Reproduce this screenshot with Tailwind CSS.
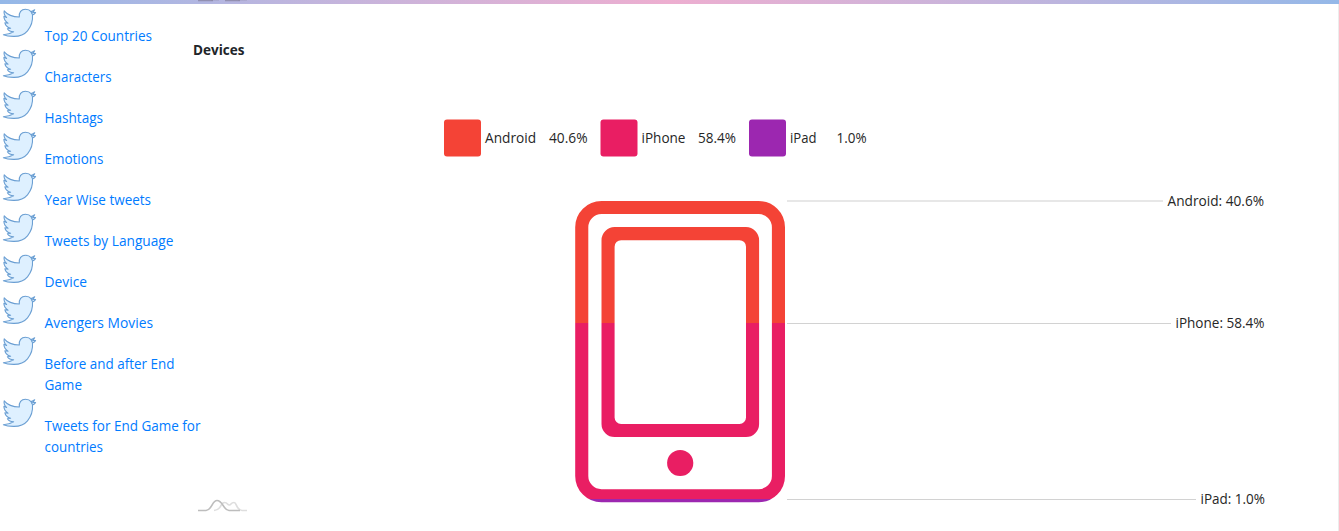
<!DOCTYPE html>
<html lang="en">
<head>
<meta charset="utf-8">
<title>Devices</title>
<script src="https://cdn.jsdelivr.net/npm/@tailwindcss/browser@4"></script>
</head>
<body class="h-[531px] overflow-hidden bg-white font-['Open_Sans',sans-serif] text-sm text-[#212529]">
<svg class="hidden">
  <symbol id="bird" viewBox="0 0 38 32">
    <path d="M4.2 4.800C7 8.200 12 10.800 19.300 11C18.800 6.500 21.200 3.200 25.500 3.200C28.300 3.200 30 4.200 31 5.600C32.300 5.300 33.600 4.700 34.700 3.800L33 6.500L35.600 6.500L33.900 8.300L32.500 9C33 15 31 20.500 27.500 24.800C24 29 19 30.500 13.500 30.400C9.500 30.300 6 29.800 3.400 28.700C7.500 28.500 10.500 27.800 13.600 25.800C10.800 25.800 8.500 24.700 7.400 22.800L10.600 22.300C7.600 21.300 5.400 19.300 4.900 16.800L8 17.300C5.200 15.300 3.800 13 3.900 10.300L6.600 11.500C4.400 9.500 3.700 7.300 4.200 4.800Z" fill="#def0ff" stroke="#6b9fd3" stroke-width="1.1" stroke-linejoin="round"/>
    <path d="M31 5.6L32.5 9M31.500 7.200L34 6.300" fill="none" stroke="#6b9fd3"/>
  </symbol>
</svg>
<div class="h-1 bg-linear-to-r from-[#94b8e8] via-[#edaed0] to-[#94b8e8] pl-[198px]">
  <svg class="block" width="50" height="4"><path d="M0 .500H15M27 .500H42" stroke="#817d98" stroke-opacity=".65" stroke-width="1.300"/><path d="M13 .5H21M40 .5H49" stroke="#817d98" stroke-opacity=".2"/></svg>
</div>
<div class="flex h-[527px]">
  <nav class="w-[193px] shrink-0 pt-[2px] leading-[21px] text-[#007bff]">
    <a class="flex"><svg class="h-8 w-[38px] shrink-0"><use href="#bird"/></svg><span class="pt-5 pl-[6px]"><svg class="block h-[21px] w-[110px] overflow-visible" fill="currentColor"><text x=".5" y="15.3" textLength="107.5" lengthAdjust="spacingAndGlyphs">Top 20 Countries</text></svg></span></a>
    <a class="flex"><svg class="h-8 w-[38px] shrink-0"><use href="#bird"/></svg><span class="pt-5 pl-[6px]"><svg class="block h-[21px] w-[110px] overflow-visible" fill="currentColor"><text x=".5" y="15.3" textLength="67" lengthAdjust="spacingAndGlyphs">Characters</text></svg></span></a>
    <a class="flex"><svg class="h-8 w-[38px] shrink-0"><use href="#bird"/></svg><span class="pt-5 pl-[6px]"><svg class="block h-[21px] w-[110px] overflow-visible" fill="currentColor"><text x=".5" y="15.3" textLength="58.5" lengthAdjust="spacingAndGlyphs">Hashtags</text></svg></span></a>
    <a class="flex"><svg class="h-8 w-[38px] shrink-0"><use href="#bird"/></svg><span class="pt-5 pl-[6px]"><svg class="block h-[21px] w-[110px] overflow-visible" fill="currentColor"><text x=".5" y="15.3" textLength="59" lengthAdjust="spacingAndGlyphs">Emotions</text></svg></span></a>
    <a class="flex"><svg class="h-8 w-[38px] shrink-0"><use href="#bird"/></svg><span class="pt-5 pl-[6px]"><svg class="block h-[21px] w-[110px] overflow-visible" fill="currentColor"><text x=".5" y="15.3" textLength="106.5" lengthAdjust="spacingAndGlyphs">Year Wise tweets</text></svg></span></a>
    <a class="flex"><svg class="h-8 w-[38px] shrink-0"><use href="#bird"/></svg><span class="pt-5 pl-[6px]"><svg class="block h-[21px] w-[130px] overflow-visible" fill="currentColor"><text x=".5" y="15.3" textLength="129" lengthAdjust="spacingAndGlyphs">Tweets by Language</text></svg></span></a>
    <a class="flex"><svg class="h-8 w-[38px] shrink-0"><use href="#bird"/></svg><span class="pt-5 pl-[6px]"><svg class="block h-[21px] w-[110px] overflow-visible" fill="currentColor"><text x=".5" y="15.3" textLength="42.5" lengthAdjust="spacingAndGlyphs">Device</text></svg></span></a>
    <a class="flex"><svg class="h-8 w-[38px] shrink-0"><use href="#bird"/></svg><span class="pt-5 pl-[6px]"><svg class="block h-[21px] w-[110px] overflow-visible" fill="currentColor"><text x=".5" y="15.3" textLength="108.5" lengthAdjust="spacingAndGlyphs">Avengers Movies</text></svg></span></a>
    <a class="flex"><svg class="h-8 w-[38px] shrink-0"><use href="#bird"/></svg><span class="pt-5 pl-[6px]"><svg class="block h-[42px] w-[130px] overflow-visible" fill="currentColor"><text x=".5" y="15.3" textLength="130" lengthAdjust="spacingAndGlyphs">Before and after End</text><text x=".5" y="36.3" textLength="37.5" lengthAdjust="spacingAndGlyphs">Game</text></svg></span></a>
    <a class="flex"><svg class="h-8 w-[38px] shrink-0"><use href="#bird"/></svg><span class="pt-5 pl-[6px]"><svg class="block h-[42px] w-[149px] overflow-visible" fill="currentColor"><text x=".5" y="15.3" textLength="156" lengthAdjust="spacingAndGlyphs">Tweets for End Game for</text><text x=".5" y="36.3" textLength="58.5" lengthAdjust="spacingAndGlyphs">countries</text></svg></span></a>
  </nav>
  <main class="min-w-0 flex-1 border-r border-[#ececec]">
    <svg class="block" width="1144" height="527" viewBox="193 4 1144 527">
      <defs>
        <linearGradient id="share" gradientUnits="userSpaceOnUse" x1="0" y1="201" x2="0" y2="502">
          <stop offset="0" stop-color="#f44336"/><stop offset=".4053" stop-color="#f44336"/>
          <stop offset=".4053" stop-color="#e91e63"/><stop offset=".99" stop-color="#e91e63"/>
          <stop offset=".99" stop-color="#9c27b0"/><stop offset="1" stop-color="#9c27b0"/>
        </linearGradient>
      </defs>
      <text x="193" y="55.3" font-weight="700" textLength="51.5" lengthAdjust="spacingAndGlyphs" fill="#212529">Devices</text>
      <rect x="444" y="119.5" width="37" height="37" rx="3" fill="#f44336"/>
      <rect x="600.5" y="119.5" width="37" height="37" rx="3" fill="#e91e63"/>
      <rect x="749" y="119.5" width="37" height="37" rx="3" fill="#9c27b0"/>
      <g fill="#262626">
        <text x="485" y="143.3" textLength="51" lengthAdjust="spacingAndGlyphs">Android</text>
        <text x="549" y="143.3" textLength="38.5" lengthAdjust="spacingAndGlyphs">40.6%</text>
        <text x="641.5" y="143.3" textLength="44" lengthAdjust="spacingAndGlyphs">iPhone</text>
        <text x="698" y="143.3" textLength="38" lengthAdjust="spacingAndGlyphs">58.4%</text>
        <text x="790" y="143.3" textLength="26.5" lengthAdjust="spacingAndGlyphs">iPad</text>
        <text x="836.5" y="143.3" textLength="30" lengthAdjust="spacingAndGlyphs">1.0%</text>
        <text x="1167.500" y="206.2" textLength="96.500" lengthAdjust="spacingAndGlyphs">Android: 40.6%</text>
        <text x="1175.5" y="328.2" textLength="89" lengthAdjust="spacingAndGlyphs">iPhone: 58.4%</text>
        <text x="1200.5" y="504.2" textLength="64.5" lengthAdjust="spacingAndGlyphs">iPad: 1.0%</text>
      </g>
      <g fill="none">
        <path d="M787 201H1163" stroke="#e7e7e7" stroke-width="2"/>
        <path d="M787 323.5H1171M787 499.5H1196" stroke="#d2d2d2"/>
      </g>
      <rect x="581.75" y="207.55" width="196.7" height="288.2" rx="19.7" fill="none" stroke="url(#share)" stroke-width="13.1"/>
      <path fill="url(#share)" fill-rule="evenodd" d="M614.6 227.1H746A13.1 13.1 0 0 1 759.1 240.2V423.9A13.1 13.1 0 0 1 746 437H614.6A13.1 13.1 0 0 1 601.5 423.9V240.2A13.1 13.1 0 0 1 614.6 227.1ZM621.1 240.2A6.5 6.5 0 0 0 614.6 246.7V417.4A6.5 6.5 0 0 0 621.1 423.9H739.5A6.5 6.5 0 0 0 746 417.4V246.7A6.5 6.5 0 0 0 739.5 240.2Z"/>
      <circle cx="680.2" cy="463" r="13.1" fill="#e91e63"/>
      <g fill="none" stroke-width="1.7">
        <path d="M214 510.5C222 510 220 502.5 224.5 502.5C228 502.5 227 505 229.5 505C231 505 231 502.5 234 502.5C237 502.5 236 510 242 510.5H247" stroke="#dedede"/>
        <path d="M198 510.5H206C212 510 212 500.5 217 500.5C223 500.5 223 510 229 510.5H240" stroke="#bdbdbd"/>
      </g>
    </svg>
  </main>
</div>
</body>
</html>
